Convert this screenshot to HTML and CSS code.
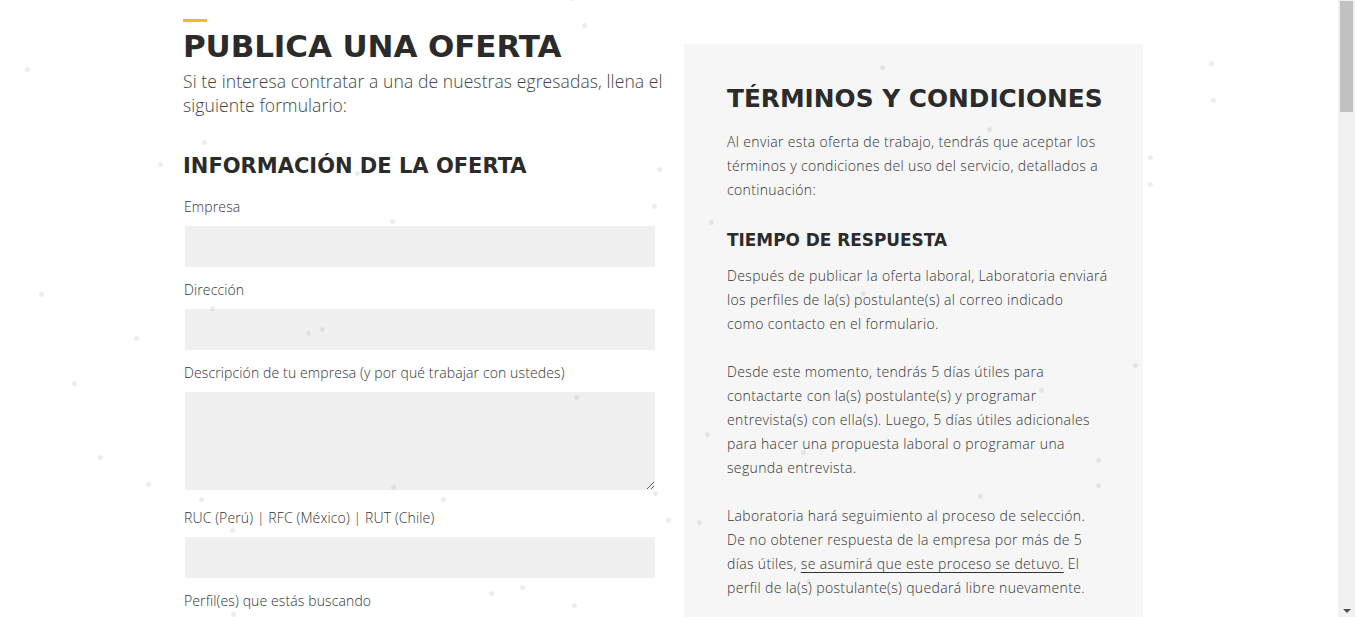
FILE: index.html
```html
<!DOCTYPE html>
<html lang="es">
<head>
<meta charset="utf-8">
<title>Publica una oferta</title>
<link rel="stylesheet" href="styles.css">
</head>
<body>
<div class="page">
  <section class="form-col">
    <span class="accent"></span>
    <h1 class="title">PUBLICA UNA OFERTA</h1>
    <p class="intro">Si te interesa contratar a una de nuestras egresadas, llena el siguiente formulario:</p>
    <h2 class="section-title">INFORMACIÓN DE LA OFERTA</h2>
    <form class="form">
      <label class="field"><span class="label">Empresa</span><input class="input" type="text"></label>
      <label class="field"><span class="label">Dirección</span><input class="input" type="text"></label>
      <label class="field field-area"><span class="label">Descripción de tu empresa (y por qué trabajar con ustedes)</span><textarea class="input textarea"></textarea></label>
      <label class="field"><span class="label">RUC (Perú) | RFC (México) | RUT (Chile)</span><input class="input" type="text"></label>
      <label class="field"><span class="label">Perfil(es) que estás buscando</span><input class="input" type="text"></label>
    </form>
  </section>
  <aside class="terms">
    <h2 class="terms-title">TÉRMINOS Y CONDICIONES</h2>
    <p class="text">Al enviar esta oferta de trabajo, tendrás que aceptar los términos y condiciones del uso del servicio, detallados a continuación:</p>
    <h3 class="terms-sub">TIEMPO DE RESPUESTA</h3>
    <p class="text">Después de publicar la oferta laboral, Laboratoria enviará los perfiles de la(s) postulante(s) al correo indicado<br>como contacto en el formulario.</p>
    <p class="text">Desde este momento, tendrás 5 días útiles para contactarte con la(s) postulante(s) y programar entrevista(s) con ella(s). Luego, 5 días útiles adicionales para hacer una propuesta laboral o programar una segunda entrevista.</p>
    <p class="text">Laboratoria hará seguimiento al proceso de selección.<br>De no obtener respuesta de la empresa por más de 5<br>días útiles, <u>se asumirá que este proceso se detuvo.</u> El<br>perfil de la(s) postulante(s) quedará libre nuevamente.</p>
  </aside>
</div>
<div class="particles" aria-hidden="true">
  <i class="dot" style="left:572px;top:-2px"></i>
  <i class="dot" style="left:584px;top:25px"></i>
  <i class="dot" style="left:204px;top:142px"></i>
  <i class="dot" style="left:357px;top:173px"></i>
  <i class="dot" style="left:392px;top:221px"></i>
  <i class="dot" style="left:659px;top:169px"></i>
  <i class="dot" style="left:654px;top:206px"></i>
  <i class="dot" style="left:212px;top:308px"></i>
  <i class="dot" style="left:308px;top:333px"></i>
  <i class="dot" style="left:322px;top:329px"></i>
  <i class="dot" style="left:576px;top:397px"></i>
  <i class="dot" style="left:393px;top:487px"></i>
  <i class="dot" style="left:201px;top:499px"></i>
  <i class="dot" style="left:443px;top:499px"></i>
  <i class="dot" style="left:655px;top:493px"></i>
  <i class="dot" style="left:668px;top:520px"></i>
  <i class="dot" style="left:232px;top:530px"></i>
  <i class="dot" style="left:491px;top:593px"></i>
  <i class="dot" style="left:522px;top:587px"></i>
  <i class="dot" style="left:574px;top:605px"></i>
  <i class="dot" style="left:233px;top:614px"></i>
  <i class="dot" style="left:882px;top:67px"></i>
  <i class="dot" style="left:989px;top:129px"></i>
  <i class="dot" style="left:1150px;top:184px"></i>
  <i class="dot" style="left:711px;top:222px"></i>
  <i class="dot" style="left:929px;top:245px"></i>
  <i class="dot" style="left:863px;top:293px"></i>
  <i class="dot" style="left:1135px;top:365px"></i>
  <i class="dot" style="left:1041px;top:390px"></i>
  <i class="dot" style="left:707px;top:434px"></i>
  <i class="dot" style="left:803px;top:452px"></i>
  <i class="dot" style="left:1098px;top:460px"></i>
  <i class="dot" style="left:1098px;top:485px"></i>
  <i class="dot" style="left:980px;top:496px"></i>
  <i class="dot" style="left:699px;top:522px"></i>
  <i class="dot" style="left:808px;top:581px"></i>
  <i class="dot" style="left:27px;top:69px"></i>
  <i class="dot" style="left:160px;top:164px"></i>
  <i class="dot" style="left:41px;top:294px"></i>
  <i class="dot" style="left:136px;top:338px"></i>
  <i class="dot" style="left:74px;top:383px"></i>
  <i class="dot" style="left:100px;top:457px"></i>
  <i class="dot" style="left:148px;top:484px"></i>
  <i class="dot" style="left:1211px;top:63px"></i>
  <i class="dot" style="left:1213px;top:100px"></i>
  <i class="dot" style="left:1150px;top:157px"></i>
</div>
<div class="scrollbar" aria-hidden="true">
  <div class="thumb"></div>
  <div class="arrow-down"></div>
</div>
</body>
</html>
```
FILE: styles.css
```css
html, body {
  margin: 0;
  padding: 0;
  height: 100%;
  overflow: hidden;
  background: #fff;
}
body {
  width: calc(100% - 17px);
  font-family: "Open Sans", "Liberation Sans", sans-serif;
  color: #333;
}
.page {
  width: 960px;
  margin-left: calc(50% - 486px);
  display: grid;
  grid-template-columns: 480px 459px;
  column-gap: 21px;
  align-items: start;
}
.form-col {
  padding-top: 19px;
}
.accent {
  display: block;
  width: 24px;
  height: 3px;
  background: #f3bb1c;
}
.title {
  margin: 5px 0 0;
  font-family: "DejaVu Sans", sans-serif;
  font-weight: 700;
  font-size: 31px;
  line-height: 38px;
  color: #2b2b2b;
  letter-spacing: -0.1px;
}
.intro {
  margin: 4px 0 0;
  font-weight: 300;
  font-size: 17.5px;
  line-height: 24px;
  letter-spacing: 0.1px;
  color: #444;
}
.section-title {
  margin: 35px 0 0;
  font-family: "DejaVu Sans", sans-serif;
  font-weight: 700;
  font-size: 21px;
  line-height: 28px;
  color: #2b2b2b;
}
.form {
  margin-top: 17px;
  display: flex;
  flex-direction: column;
  gap: 14px;
}
.field {
  display: flex;
  flex-direction: column;
}
.field-area {
  margin-bottom: 5px;
}
.label {
  margin-left: 1px;
  font-weight: 300;
  font-size: 14px;
  line-height: 19px;
  letter-spacing: 0.12px;
  color: #333;
  margin-bottom: 10px;
}
.input {
  display: block;
  margin-left: 2px;
  width: 470px;
  height: 41px;
  box-sizing: border-box;
  border: none;
  border-radius: 2px;
  background: #f0f0f0;
  font: inherit;
  padding: 8px 12px;
}
.textarea {
  height: 98px;
  resize: vertical;
}
.field + .field {
  margin-top: -1px;
}
.terms {
  margin-top: 44px;
  background: #f6f6f6;
  padding: 40px 30px 40px 43px;
  min-height: 560px;
}
.terms-title {
  margin: 0;
  font-family: "DejaVu Sans", sans-serif;
  font-weight: 700;
  font-size: 24.8px;
  line-height: 30px;
  color: #2b2b2b;
}
.terms-sub {
  margin: 26px 0 12px;
  font-family: "DejaVu Sans", sans-serif;
  font-weight: 700;
  font-size: 16.9px;
  line-height: 24px;
  color: #2b2b2b;
}
.text {
  margin: 0 0 24px;
  font-weight: 300;
  font-size: 14px;
  line-height: 24px;
  letter-spacing: 0.35px;
  color: #333;
}
.terms-title + .text {
  margin-top: 16px;
}
.text u {
  text-underline-offset: 3px;
}
.particles {
  position: fixed;
  inset: 0;
  pointer-events: none;
}
.dot {
  position: absolute;
  width: 5px;
  height: 5px;
  margin: -2px 0 0 -2px;
  border-radius: 50%;
  background: rgba(0, 0, 0, 0.07);
}
.scrollbar {
  position: fixed;
  top: 0;
  right: 0;
  width: 17px;
  height: 100%;
  background: #f1f1f1;
}
.thumb {
  position: absolute;
  top: 1px;
  left: 2px;
  width: 13px;
  height: 111px;
  background: #c1c1c1;
}
.arrow-down {
  position: absolute;
  bottom: 4px;
  left: 5px;
  width: 0;
  height: 0;
  border-left: 4px solid transparent;
  border-right: 4px solid transparent;
  border-top: 4px solid #505050;
}
```
